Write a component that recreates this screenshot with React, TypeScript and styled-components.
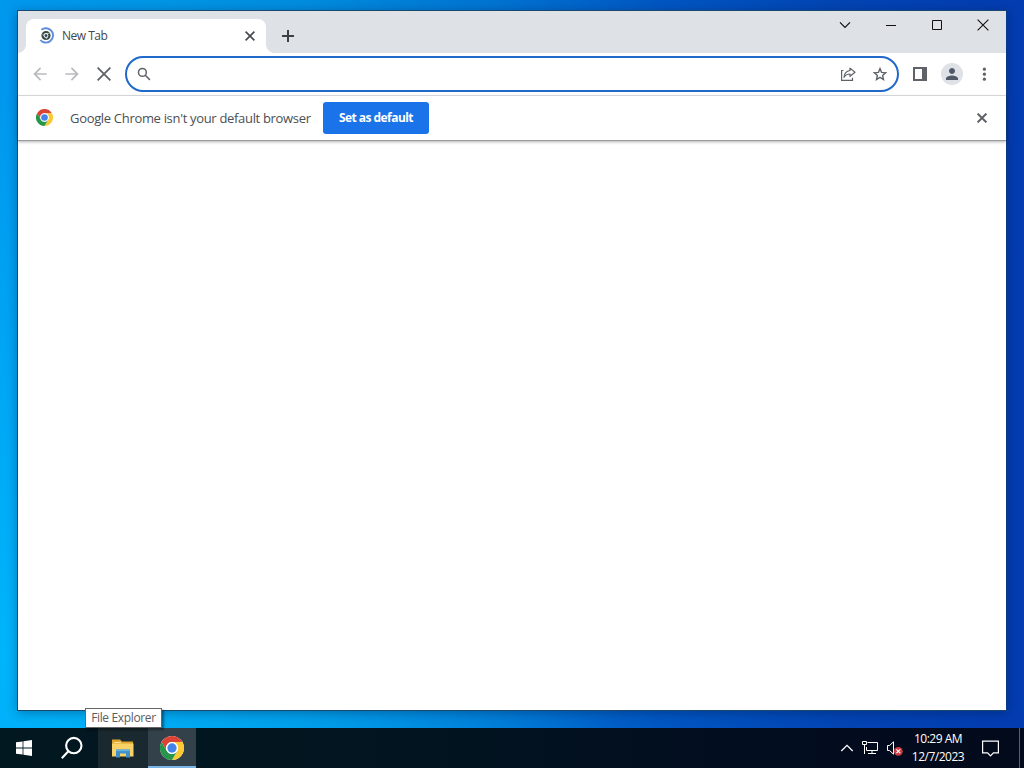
import React from 'react';
import styled, { createGlobalStyle } from 'styled-components';
import { MdArrowBack, MdArrowForward, MdPerson } from 'react-icons/md';

const GlobalStyle = createGlobalStyle`
  * {
    box-sizing: border-box;
  }

  body {
    margin: 0;
    font-family: 'Open Sans', 'Noto Sans', sans-serif;
  }

  svg {
    display: block;
    flex: none;
  }
`;

const Desktop = styled.div`
  display: flex;
  flex-direction: column;
  width: 1024px;
  height: 768px;
  overflow: hidden;
  background:
    radial-gradient(ellipse 620px 560px at 0 85%, rgba(0, 190, 255, 0.75), rgba(0, 180, 250, 0)),
    linear-gradient(
      to right,
      #0098ee 0%,
      #0096e6 15%,
      #008cde 30%,
      #0074d2 48%,
      #0056c2 65%,
      #0344b3 82%,
      #033cb0 100%
    );
`;

const Workspace = styled.main`
  flex: 1;
  padding: 10px 17px 17px;
`;

const Window = styled.section`
  display: flex;
  flex-direction: column;
  height: 701px;
  background: #ffffff;
  border: 1px solid #17496e;
  border-right-color: #0a3a8c;
  box-shadow: 0 2px 10px rgba(0, 20, 60, 0.35);
`;

const TabStrip = styled.div`
  display: flex;
  align-items: flex-start;
  height: 42px;
  padding-left: 8px;
  background: #dee1e6;
`;

const Tab = styled.div`
  position: relative;
  display: flex;
  align-items: center;
  width: 240px;
  height: 34px;
  margin-top: 8px;
  padding: 0 11px 1px 12px;
  background: #ffffff;
  border-radius: 8px 8px 0 0;

  &::before,
  &::after {
    content: '';
    position: absolute;
    bottom: 0;
    width: 8px;
    height: 8px;
  }

  &::before {
    left: -8px;
    background: radial-gradient(circle at 0 0, transparent 7.5px, #ffffff 8px);
  }

  &::after {
    right: -8px;
    background: radial-gradient(circle at 100% 0, transparent 7.5px, #ffffff 8px);
  }
`;

const TabTitle = styled.span`
  flex: 1;
  margin-left: 7px;
  color: #45484c;
  font-size: 12px;
  letter-spacing: -0.5px;
`;

const IconButton = styled.button<{ size?: number; color?: string }>`
  display: flex;
  align-items: center;
  justify-content: center;
  flex: none;
  width: ${(props) => props.size ?? 32}px;
  height: ${(props) => props.size ?? 32}px;
  padding: 0;
  border: none;
  background: none;
  color: ${(props) => props.color ?? '#5f6368'};
`;

const NewTabButton = styled(IconButton)`
  margin: 9px 0 0 6px;
`;

const CaptionButtons = styled.div`
  display: flex;
  margin-left: auto;
`;

const CaptionButton = styled.button`
  display: flex;
  align-items: center;
  justify-content: center;
  width: 46px;
  height: 29px;
  padding: 0 0 1px;
  border: none;
  background: none;
  color: #111111;
`;

const Toolbar = styled.div`
  display: flex;
  align-items: center;
  height: 43px;
  padding: 0 6px;
  border-bottom: 1px solid #dfe1e5;
`;

const Omnibox = styled.div`
  display: flex;
  align-items: center;
  width: 774px;
  height: 36px;
  margin: 0 5px;
  padding: 0 1px 0 10px;
  border: 2px solid #2169cb;
  border-radius: 18px;
`;

const OmniboxInput = styled.input`
  flex: 1;
  min-width: 0;
  border: none;
  outline: none;
  background: none;
`;

const Avatar = styled.span`
  display: flex;
  align-items: center;
  justify-content: center;
  width: 22px;
  height: 22px;
  border-radius: 50%;
  background: #dee1e6;
  color: #505968;
`;

const InfoBar = styled.div`
  position: relative;
  display: flex;
  align-items: center;
  height: 45px;
  padding: 0 8px 1px 18px;
  border-bottom: 1px solid #9b9b9b;
  box-shadow: 0 1px 3px rgba(0, 0, 0, 0.3);
`;

const InfoText = styled.span`
  width: 241px;
  margin: 0 12px 0 17px;
  color: #4c4f53;
  font-size: 13px;
  letter-spacing: -0.32px;
  white-space: nowrap;
`;

const DefaultButton = styled.button`
  width: 106px;
  height: 32px;
  margin-right: auto;
  padding: 0;
  border: none;
  border-radius: 3px;
  background: #1a73e8;
  color: #ffffff;
  font-family: inherit;
  font-size: 12px;
  font-weight: 700;
  letter-spacing: -0.55px;
`;

const Taskbar = styled.footer`
  position: relative;
  display: flex;
  height: 40px;
  background: linear-gradient(to right, #021821, #021520 35%, #020d1f 75%, #030a1c);
`;

const TaskButton = styled.div<{ width: number; shade?: string; active?: boolean }>`
  display: flex;
  align-items: center;
  justify-content: center;
  width: ${(props) => props.width}px;
  height: 40px;
  background: ${(props) => props.shade ?? 'transparent'};
  box-shadow: ${(props) => (props.active ? 'inset 0 -2px #7ab4e6' : 'none')};
`;

const SearchButton = styled(TaskButton)`
  padding-right: 2px;
`;

const Tooltip = styled.div`
  position: absolute;
  left: 85px;
  top: -20px;
  width: 77px;
  height: 20px;
  border: 1px solid #666666;
  background: #ffffff;
  box-shadow: 2px 2px 2px rgba(0, 0, 0, 0.4);
  color: #5c5c5c;
  font-size: 12px;
  letter-spacing: -0.35px;
  line-height: 18px;
  text-align: center;
  white-space: nowrap;
`;

const Tray = styled.div`
  display: flex;
  align-items: center;
  margin-left: auto;
`;

const TrayIcons = styled.div`
  display: flex;
  align-items: center;
  gap: 7px;
`;

const Clock = styled.div`
  width: 68px;
  margin-right: 10px;
  color: #ffffff;
  font-size: 12px;
  letter-spacing: -0.5px;
  line-height: 18px;
  text-align: center;
  white-space: nowrap;
`;

const ShowDesktop = styled.div`
  width: 5px;
  height: 40px;
  margin-left: 20px;
  border-left: 1px solid #57616c;
`;

const ChromeLogo = ({ size }: { size: number }) => (
  <svg width={size} height={size} viewBox="0 0 48 48">
    <circle cx="24" cy="24" r="24" fill="#fff" />
    <path d="M24 0a24 24 0 0 1 20.8 12H24a12 12 0 0 0-10.4 18L3.2 12A24 24 0 0 1 24 0Z" fill="#dc4335" />
    <path d="M44.8 12A24 24 0 0 1 24 48l10.4-18A12 12 0 0 0 24 12Z" fill="#fbc934" />
    <path d="M24 48A24 24 0 0 1 3.2 12l10.4 18a12 12 0 0 0 20.8 0Z" fill="#27964a" />
    <circle cx="24" cy="24" r="11.8" fill="#fff" />
    <circle cx="24" cy="24" r="9.3" fill="#4383ea" />
  </svg>
);

const LoadingFavicon = () => (
  <svg width="17" height="17" viewBox="0 0 17 17" fill="none">
    <path d="M3.4 2.7A7.2 7.2 0 1 1 2.3 13" stroke="#5f8cdc" strokeWidth="1.9" />
    <circle cx="8" cy="8.5" r="3.5" stroke="#34473f" strokeWidth="2.2" />
    <circle cx="8" cy="8.5" r="1.5" fill="#344b61" />
    <path d="M8 6.4h3.6M6.2 9.5 4.5 6.7M9.8 9.5l-1.7 2.9" stroke="#dce4e0" strokeWidth=".7" />
  </svg>
);

const Cross = ({ size, stroke = 1.6 }: { size: number; stroke?: number }) => (
  <svg width={size} height={size} viewBox={`0 0 ${size} ${size}`} stroke="currentColor" strokeWidth={stroke}>
    <path d={`M.6.6 ${size - 0.6} ${size - 0.6}M${size - 0.6} .6.6 ${size - 0.6}`} />
  </svg>
);

const ShareIcon = () => (
  <svg width="16" height="16" viewBox="0 0 16 16" fill="none" stroke="#5f6368" strokeWidth="1.2">
    <path d="M3.4 4.5H1.6v9.9h10.9v-2.6" />
    <path d="M10 2.1 15 6.2l-5 4.1V8C7.2 8 5.3 9 4 11.3c.3-3.6 2.1-6.3 6-6.8Z" strokeLinejoin="round" />
  </svg>
);

const StarIcon = () => (
  <svg width="16" height="16" viewBox="0 0 16 16" fill="none" stroke="#5f6368" strokeWidth="1.4">
    <path d="m8 2.6 1.6 3.8 4.1.4-3.1 2.7.9 4L8 11.4l-3.5 2.1.9-4-3.1-2.7 4.1-.4Z" />
  </svg>
);

const ExplorerIcon = () => (
  <svg width="22" height="19" viewBox="0 0 22 19">
    <path d="M0 .5h8l2 2h11v4H0Z" fill="#dda42b" />
    <path d="M0 4.5h21.5v13H0Z" fill="#f8d267" />
    <path d="M2 3h7v1H2Z" fill="#f6e3a0" />
    <path d="M4 18.5v-8h14v8h-4v-4H8v4Z" fill="#3f91cc" />
    <path d="M4 10.5h14v1.6H4Z" fill="#66b3df" />
  </svg>
);

const NetworkIcon = () => (
  <svg width="18" height="16" viewBox="0 0 18 16" fill="none" stroke="#fff">
    <path d="M6.5 2.5h10v8H5.5V7M11 10.5v3M7 13.5h8" />
    <path d="M1.5 1.5h4v3h-4ZM3.5 4.5v9.5" />
  </svg>
);

const MutedIcon = () => (
  <svg width="18" height="16" viewBox="0 0 18 16" fill="none">
    <path d="M1.5 5.5h2l4-3.7v12.4l-4-3.7h-2Z" stroke="#fff" />
    <circle cx="12.3" cy="11.3" r="4.4" fill="#cf3b40" />
    <path d="m10.4 9.4 3.8 3.8m0-3.8-3.8 3.8" stroke="#fff" strokeWidth="1.1" />
  </svg>
);

const App: React.FC = () => {
  return (
    <Desktop>
      <GlobalStyle />
      <Workspace>
        <Window>
          <TabStrip>
            <Tab>
              <LoadingFavicon />
              <TabTitle>New Tab</TabTitle>
              <IconButton size={10} color="#45484c" aria-label="Close tab">
                <Cross size={10} stroke={1.6} />
              </IconButton>
            </Tab>
            <NewTabButton color="#3c4043" aria-label="New tab">
              <svg width="12" height="12" viewBox="0 0 12 12" stroke="currentColor" strokeWidth="2">
                <path d="M6 0v12M0 6h12" />
              </svg>
            </NewTabButton>
            <CaptionButtons>
              <CaptionButton aria-label="Search tabs">
                <svg width="12" height="12" viewBox="0 0 12 12" fill="none" stroke="currentColor" strokeWidth="1.2">
                  <path d="m1 3.3 5 5.2 5-5.2" />
                </svg>
              </CaptionButton>
              <CaptionButton aria-label="Minimize">
                <svg width="10" height="10" viewBox="0 0 10 10" stroke="currentColor">
                  <path d="M0 5.5h10" />
                </svg>
              </CaptionButton>
              <CaptionButton aria-label="Maximize">
                <svg width="10" height="10" viewBox="0 0 10 10" fill="none" stroke="currentColor">
                  <path d="M.5.5h9v9h-9Z" />
                </svg>
              </CaptionButton>
              <CaptionButton aria-label="Close">
                <Cross size={12} stroke={1.1} />
              </CaptionButton>
            </CaptionButtons>
          </TabStrip>

          <Toolbar>
            <IconButton color="#b8babd" aria-label="Back">
              <MdArrowBack size={20} />
            </IconButton>
            <IconButton color="#b8babd" aria-label="Forward">
              <MdArrowForward size={20} />
            </IconButton>
            <IconButton aria-label="Stop">
              <Cross size={14} stroke={1.8} />
            </IconButton>
            <Omnibox>
              <svg width="14" height="14" viewBox="0 0 14 14" fill="none" stroke="#5f6368" strokeWidth="1.5">
                <circle cx="5.4" cy="5.4" r="3.9" />
                <path d="m8.3 8.3 4.6 4.6" />
              </svg>
              <OmniboxInput aria-label="Address and search bar" />
              <IconButton aria-label="Share">
                <ShareIcon />
              </IconButton>
              <IconButton aria-label="Bookmark">
                <StarIcon />
              </IconButton>
            </Omnibox>
            <IconButton aria-label="Side panel">
              <svg width="14" height="14" viewBox="0 0 14 14">
                <path d="M0 0h14v14H0Zm2 2v10h7V2Z" fill="currentColor" fillRule="evenodd" />
              </svg>
            </IconButton>
            <IconButton aria-label="Profile">
              <Avatar>
                <MdPerson size={18} />
              </Avatar>
            </IconButton>
            <IconButton aria-label="Menu">
              <svg width="4" height="14" viewBox="0 0 4 14" fill="currentColor">
                <circle cx="2.4" cy="2.2" r="1.6" />
                <circle cx="2.4" cy="7.2" r="1.6" />
                <circle cx="2.4" cy="12.2" r="1.6" />
              </svg>
            </IconButton>
          </Toolbar>

          <InfoBar>
            <ChromeLogo size={17} />
            <InfoText>Google Chrome isn't your default browser</InfoText>
            <DefaultButton>Set as default</DefaultButton>
            <IconButton aria-label="Dismiss">
              <Cross size={10} stroke={2} />
            </IconButton>
          </InfoBar>
        </Window>
      </Workspace>

      <Taskbar>
        <Tooltip>File Explorer</Tooltip>
        <TaskButton width={48}>
          <svg width="16" height="16" viewBox="0 0 16 16" fill="#fff">
            <path d="M0 2.3 6.6 1.4v6.2H0ZM7.4 1.3 16 0v7.6H7.4ZM0 8.4h6.6v6.2L0 13.7ZM7.4 8.4H16V16l-8.6-1.3Z" />
          </svg>
        </TaskButton>
        <SearchButton width={50}>
          <svg width="24" height="24" viewBox="0 0 24 24" fill="none" stroke="#fff" strokeWidth="2.1">
            <circle cx="13.8" cy="9.6" r="7.7" />
            <path d="m8.4 15.2-6.6 7" />
          </svg>
        </SearchButton>
        <TaskButton width={50} shade="#1a292f">
          <ExplorerIcon />
        </TaskButton>
        <TaskButton width={48} shade="#33424a" active>
          <ChromeLogo size={24} />
        </TaskButton>
        <Tray>
          <TrayIcons>
            <svg width="14" height="10" viewBox="0 0 14 10" fill="none" stroke="#fff" strokeWidth="1.3">
              <path d="m1.3 8 5.7-5.7L12.7 8" />
            </svg>
            <NetworkIcon />
            <MutedIcon />
          </TrayIcons>
          <Clock>
            <div>10:29 AM</div>
            <div>12/7/2023</div>
          </Clock>
          <svg width="17" height="17" viewBox="0 0 17 17" fill="none" stroke="#fff" strokeWidth="1.2">
            <path d="M.6 1.1h15.8v11.8h-5L8.5 15.8l-2.9-2.9h-5Z" />
          </svg>
          <ShowDesktop />
        </Tray>
      </Taskbar>
    </Desktop>
  );
};

export default App;
